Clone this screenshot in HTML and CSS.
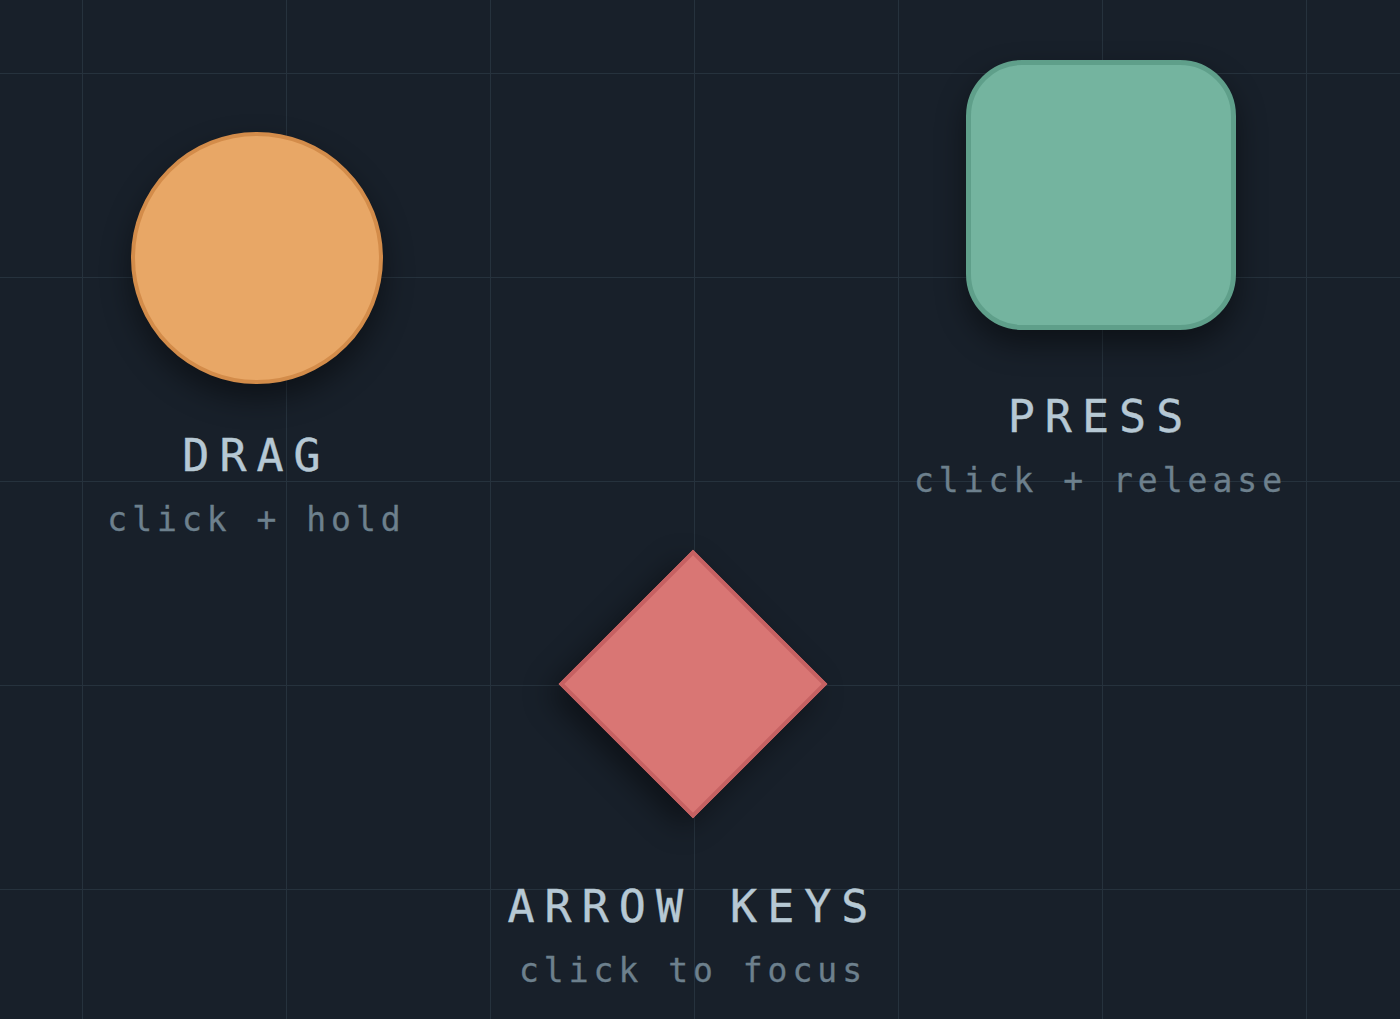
FILE: index.html
```html
<!DOCTYPE html>
<html lang="en">
<head>
	<meta charset="utf-8">
	<title>Input playground</title>
	<link rel="stylesheet" href="styles.css">
</head>
<body>
<main class="board">
	<div class="widget widget-drag">
		<div class="shape circle"></div>
		<h2 class="label">DRAG</h2>
		<p class="hint">click + hold</p>
	</div>

	<div class="widget widget-press">
		<div class="shape square"></div>
		<h2 class="label">PRESS</h2>
		<p class="hint">click + release</p>
	</div>

	<div class="widget widget-keys">
		<div class="shape diamond" tabindex="0"></div>
		<h2 class="label">ARROW KEYS</h2>
		<p class="hint">click to focus</p>
	</div>
</main>
</body>
</html>
```

FILE: styles.css
```css
html, body{
	margin: 0;
	height: 100%;
	overflow: hidden;
}
body{
	background: #18202a;
	font-family: "DejaVu Sans Mono", "Liberation Mono", monospace;
}
.board{
	position: relative;
	height: 100%;
	background-image:
		linear-gradient(to right, #26323d 1px, transparent 1px),
		linear-gradient(to bottom, #26323d 1px, transparent 1px);
	background-size: 204px 204px;
	background-position: 82px 73px;
}

/* each widget sits at its own spot on the board */
.widget{
	position: absolute;
	width: 500px;
	display: flex;
	flex-direction: column;
	align-items: center;
}
.widget-drag{ left: 6.5px; top: 132px; }
.widget-press{ left: 850.5px; top: 60px; }
.widget-keys{ left: 443px; top: 589px; }

.shape{
	box-sizing: border-box;
	box-shadow: 0 14px 30px rgba(0, 0, 0, .45);
}
.circle{
	width: 252px;
	height: 252px;
	border-radius: 50%;
	background: #e8a766;
	border: 4px solid #d38c4a;
}
.square{
	width: 270px;
	height: 270px;
	border-radius: 56px;
	background: #74b49f;
	border: 5px solid #5f9f8a;
}
.diamond{
	width: 190px;
	height: 190px;
	background: #d97674;
	border: 4px solid #c66162;
	transform: rotate(45deg);
	outline: none;
}

.label{
	margin: 0;
	font-size: 45px;
	line-height: 1;
	font-weight: normal;
	letter-spacing: 10px;
	color: #b6c8d4;
	-webkit-text-stroke: .4px #b6c8d4;
}
.hint{
	margin: 25px 0 0;
	font-size: 33px;
	line-height: 1;
	letter-spacing: 5px;
	color: #6d808d;
	-webkit-text-stroke: .3px #6d808d;
}
.widget-drag .label{ margin-top: 49px; }
.widget-press .label{ margin-top: 64px; }
.widget-keys .label{ margin-top: 105px; }
```
